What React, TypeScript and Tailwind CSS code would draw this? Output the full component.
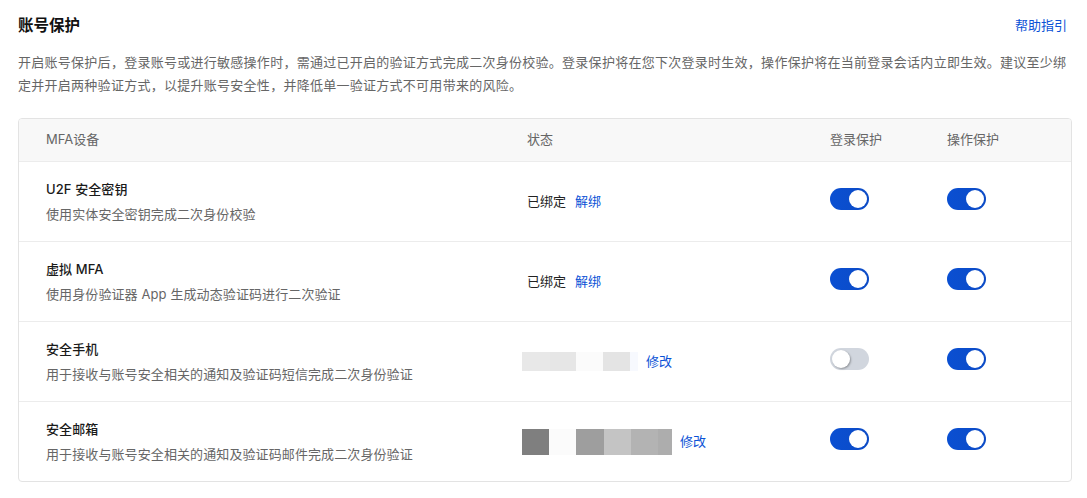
import { Fragment } from "react";

type Device = {
  name: string;
  desc: string;
  status: "bound" | "phone" | "email";
  login: boolean;
  operate: boolean;
};

const devices: Device[] = [
  { name: "U2F 安全密钥", desc: "使用实体安全密钥完成二次身份校验", status: "bound", login: true, operate: true },
  { name: "虚拟 MFA", desc: "使用身份验证器 App 生成动态验证码进行二次验证", status: "bound", login: true, operate: true },
  { name: "安全手机", desc: "用于接收与账号安全相关的通知及验证码短信完成二次身份验证", status: "phone", login: false, operate: true },
  { name: "安全邮箱", desc: "用于接收与账号安全相关的通知及验证码邮件完成二次身份验证", status: "email", login: true, operate: true },
];

function Toggle({ on }: { on: boolean }) {
  return (
    <button
      type="button"
      className={
        on
          ? "relative w-[39px] h-[22px] rounded-full bg-gradient-to-r from-[#0a4fd2] to-[#0c4bc6]"
          : "relative w-[39px] h-[22px] rounded-full bg-[#d1d6de]"
      }
    >
      <span
        className={
          on
            ? "absolute top-[2px] right-[2px] w-[18px] h-[18px] rounded-full bg-white"
            : "absolute top-[2px] left-[2px] w-[18px] h-[18px] rounded-full bg-white shadow-[1px_1px_2px_rgba(0,0,0,0.3)]"
        }
      />
    </button>
  );
}

// masked phone number / email blocks
function PhoneMask() {
  return (
    <div className="flex h-[19px]">
      <div className="w-[28px] bg-[#e8e8e8]" />
      <div className="w-[26px] bg-[#e6e6e6]" />
      <div className="w-[27px] bg-[#fbfbfb]" />
      <div className="w-[27px] bg-[#e4e4e4]" />
      <div className="w-[8px] bg-[#f7f9fe]" />
    </div>
  );
}

function EmailMask() {
  return (
    <div className="flex h-[26px]">
      <div className="w-[27px] bg-[#7f7f7f]" />
      <div className="w-[27px] bg-[#fbfbfb]" />
      <div className="w-[28px] bg-[#9e9e9e]" />
      <div className="w-[27px] bg-[#c4c4c4]" />
      <div className="w-[27px] bg-[#b3b3b3]" />
      <div className="w-[14px] bg-[#adadad]" />
    </div>
  );
}

function Status({ kind }: { kind: Device["status"] }) {
  if (kind === "bound") {
    return (
      <div className="flex items-center gap-[9px] text-[13px]">
        <span className="text-[#222]">已绑定</span>
        <a className="text-[#0b52d6] cursor-pointer">解绑</a>
      </div>
    );
  }
  return (
    <div className="flex items-center gap-[8px] text-[13px] -ml-[5px]">
      {kind === "phone" ? <PhoneMask /> : <EmailMask />}
      <a className="text-[#0b52d6] cursor-pointer">修改</a>
    </div>
  );
}

export default function App() {
  return (
    <div className="bg-white min-h-[498px] pl-[18px] pr-[15px] pt-[15px] font-['Inter','Noto_Sans_CJK_SC',sans-serif]">
      <div className="flex items-center justify-between h-[22px]">
        <h1 className="text-[15.5px] font-semibold text-[#111]">账号保护</h1>
        <a className="text-[13px] text-[#0b52d6] mr-[5px] cursor-pointer">帮助指引</a>
      </div>
      <p className="mt-[14px] text-[13px] tracking-[0.27px] leading-[23px] text-[#666]">
        开启账号保护后，登录账号或进行敏感操作时，需通过已开启的验证方式完成二次身份校验。登录保护将在您下次登录时生效，操作保护将在当前登录会话内立即生效。建议至少绑定并开启两种验证方式，以提升账号安全性，并降低单一验证方式不可用带来的风险。
      </p>

      <div className="mt-[21px] border border-[#e3e3e3] rounded-[4px] overflow-hidden">
        <div className="grid grid-cols-[481px_303px_117px_1fr] pl-[27px] h-[42px] items-center bg-[#f8f8f8] text-[13px] text-[#666]">
          <span>MFA设备</span>
          <span>状态</span>
          <span>登录保护</span>
          <span>操作保护</span>
        </div>
        {devices.map((d) => (
          <Fragment key={d.name}>
            <div className="grid grid-cols-[481px_303px_117px_1fr] pl-[27px] h-[80px] items-center border-t border-[#ececec]">
              <div className="flex flex-col gap-[5px] tracking-[0.1px]">
                <span className="text-[13px] leading-5 font-medium text-[#1a1a1a]">{d.name}</span>
                <span className="text-[13px] leading-5 text-[#666]">{d.desc}</span>
              </div>
              <Status kind={d.status} />
              <div>
                <Toggle on={d.login} />
              </div>
              <div>
                <Toggle on={d.operate} />
              </div>
            </div>
          </Fragment>
        ))}
      </div>
    </div>
  );
}
